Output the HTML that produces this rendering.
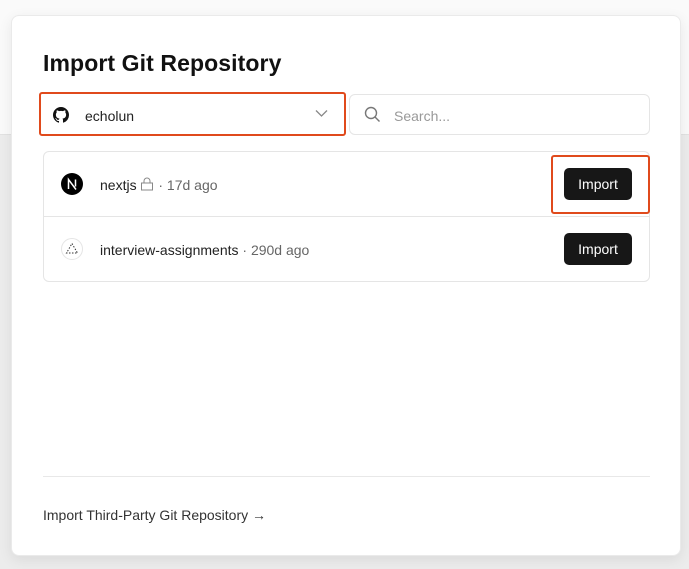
<!DOCTYPE html>
<html><head><meta charset="utf-8"><style>
*{box-sizing:border-box;margin:0;padding:0}
body{width:689px;height:569px;overflow:hidden;font-family:"Liberation Sans",sans-serif;background:#ececec;position:relative}
.top{position:absolute;left:0;top:0;width:689px;height:135px;background:#fafafa;border-bottom:1px solid #e2e2e2}
.card{position:absolute;left:11px;top:15px;width:670px;height:541px;background:#fff;border-radius:8px;border:1px solid #eaeaea;box-shadow:0 4px 14px rgba(0,0,0,.08)}
h1{position:absolute;left:43px;top:50px;font-size:23px;font-weight:bold;color:#111;letter-spacing:0.1px}
.sel{position:absolute;left:39px;top:92px;width:307px;height:44px;border:2px solid #e04a1c;border-radius:3px}
.txt{position:absolute;font-size:14px;color:#222}
.search{position:absolute;left:349px;top:94px;width:301px;height:41px;border:1px solid #e5e5e5;border-radius:6px}
.list{position:absolute;left:43px;top:151px;width:607px;height:131px;border:1px solid #e5e5e5;border-radius:6px}
.list .div{position:absolute;left:0;right:0;top:64px;border-top:1px solid #e5e5e5}
.btn{position:absolute;width:68px;height:32px;background:#171717;color:#fff;border-radius:5px;font-size:14px;text-align:center;line-height:32px}
.hl{position:absolute;left:551px;top:155px;width:99px;height:59px;border:2px solid #e04a1c;border-radius:3px}
.sep{position:absolute;left:43px;top:476px;width:607px;border-top:1px solid #e8e8e8}
.foot{position:absolute;left:43px;top:507px;font-size:14px;color:#333}
.gray{color:#666}
</style></head><body>
<div class="top"></div>
<div class="card"></div>
<h1>Import Git Repository</h1>
<div class="sel"></div>
<svg style="position:absolute;left:53px;top:107px" width="16" height="16" viewBox="0 0 16 16"><path fill="#111" d="M8 0C3.58 0 0 3.58 0 8c0 3.540 2.29 6.53 5.47 7.59.4.07.55-.17.55-.38v-1.330c-2.23.48-2.7-1.07-2.7-1.07-.36-.93-.89-1.17-.89-1.17-.73-.5.05-.49.05-.49.8.06 1.23.83 1.23.83.71 1.23 1.87.87 2.33.66.07-.52.28-.87.5-1.07-1.78-.2-3.64-.89-3.64-3.95 0-.87.31-1.59.82-2.15-.08-.2-.36-1.02.08-2.12 0 0 .67-.21 2.2.82.64-.18 1.32-.27 2-.27.68 0 1.36.09 2 .27 1.53-1.04 2.2-.82 2.2-.82.44 1.1.16 1.92.08 2.12.51.56.82 1.27.82 2.15 0 3.07-1.87 3.75-3.65 3.95.29.25.54.73.54 1.48v2.2c0 .21.15.46.55.38A8.01 8.01 0 0016 8c0-4.42-3.58-8-8-8z"/></svg>
<div class="txt" style="left:85px;top:108px">echolun</div>
<svg style="position:absolute;left:315px;top:109px" width="13" height="9" viewBox="0 0 13 9"><path d="M1 1.5l5.5 5.5 5.5-5.5" fill="none" stroke="#888" stroke-width="1.3"/></svg>
<div class="search"></div>
<svg style="position:absolute;left:364px;top:106px" width="17" height="17" viewBox="0 0 17 17"><circle cx="7" cy="7" r="5.5" fill="none" stroke="#777" stroke-width="1.4"/><path d="M11 11l4.5 4.5" stroke="#777" stroke-width="1.4"/></svg>
<div class="txt" style="left:394px;top:108px;color:#999">Search...</div>
<div class="list"><div class="div"></div></div>
<svg style="position:absolute;left:61px;top:173px" width="22" height="22" viewBox="0 0 22 22"><circle cx="11" cy="11" r="11" fill="#000"/><path d="M7.5 16V6.5l7.5 10M14.5 6.5v7" stroke="#fff" stroke-width="1.5" fill="none"/></svg>
<div class="txt" style="left:100px;top:177px">nextjs <svg width="14" height="14" viewBox="0 0 14 14" style="vertical-align:-1px"><rect x="1.5" y="6" width="11" height="7" fill="none" stroke="#888"/><path d="M4 6V4a3 3 0 016 0v2" fill="none" stroke="#888"/></svg><span class="gray"> · 17d ago</span></div>
<div class="hl"></div>
<div class="btn" style="left:564px;top:168px">Import</div>
<svg style="position:absolute;left:61px;top:238px" width="22" height="22" viewBox="0 0 22 22"><circle cx="11" cy="11" r="10.5" fill="#fff" stroke="#e5e5e5"/><path d="M11 5.5L16.5 15H5.5z" fill="none" stroke="#333" stroke-width="1" stroke-dasharray="1.5 1.5"/></svg>
<div class="txt" style="left:100px;top:242px">interview-assignments<span class="gray"> · 290d ago</span></div>
<div class="btn" style="left:564px;top:233px">Import</div>
<div class="sep"></div>
<div class="foot">Import Third-Party Git Repository →</div>
</body></html>
